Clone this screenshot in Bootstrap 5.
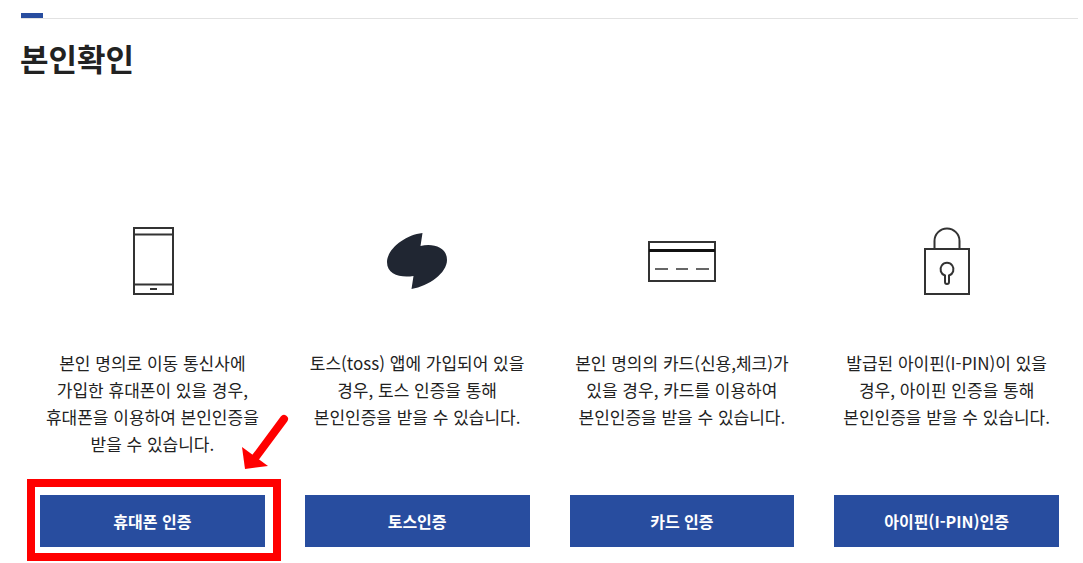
<!DOCTYPE html>
<html lang="ko">
<head>
<meta charset="utf-8">
<meta name="viewport" content="width=device-width, initial-scale=1">
<title>본인확인</title>
<link href="https://cdn.jsdelivr.net/npm/bootstrap@5.3.0/dist/css/bootstrap.min.css" rel="stylesheet">
<style>
  body { font-family: "Noto Sans CJK KR", sans-serif; color: #222; background: #fff; }
  .page { padding: 13px 4px 16px 20px; }
  .title-rule { height: 6px; border-bottom: 1px solid #e2e2e2; margin: 0 1px; }
  .title-rule::before { content: ""; display: block; width: 22px; height: 5px; background: #284d9f; }
  .page-title { font-size: 31px; line-height: 46px; font-weight: 700; margin: 16px 0 134px; }
  .method { padding: 0 20px; }
  .method-icon { height: 90px; margin-bottom: 44px; }
  .method-text { font-size: 17px; line-height: 27px; min-height: 108px; margin: 0 -8px 38px; word-break: keep-all; }
  .btn-auth { --bs-btn-color: #fff; --bs-btn-bg: #284d9f; --bs-btn-hover-color: #fff; --bs-btn-hover-bg: #1f3e83; height: 52px; font-size: 16px; line-height: 24px; font-weight: 700; border: 0; }
  .highlight { position: absolute; top: -16px; right: -16px; bottom: -14px; left: -13px; border: 8px solid #f00; pointer-events: none; }
  .pointer { position: absolute; right: -24px; bottom: 78px; pointer-events: none; }
</style>
</head>
<body>
<main class="page container-fluid">
  <div class="title-rule"></div>
  <h1 class="page-title">본인확인</h1>
  <div class="row g-0 text-center">
    <section class="method col-3">
      <div class="method-icon">
        <svg width="70" height="90" viewBox="0 0 70 90" fill="none" stroke="#333" stroke-width="2" aria-hidden="true">
          <path d="M17 13h39v66H17zM17 19.500h39M17 69.500h39"/><path d="M33 74h7"/>
        </svg>
      </div>
      <p class="method-text">본인 명의로 이동 통신사에<br>가입한 휴대폰이 있을 경우,<br>휴대폰을 이용하여 본인인증을<br>받을 수 있습니다.</p>
      <div class="position-relative">
        <button type="button" class="btn btn-auth rounded-0 w-100">휴대폰 인증</button>
        <span class="highlight"></span>
        <svg class="pointer" width="48" height="58" viewBox="0 0 48 58" aria-hidden="true">
          <path d="M43 8L14 47" stroke="#f00" stroke-width="8" stroke-linecap="round"/>
          <path d="M1 36L4 58 27 55z" fill="#f00"/>
        </svg>
      </div>
    </section>
    <section class="method col-3">
      <div class="method-icon">
        <svg width="80" height="90" viewBox="0 0 80 90" aria-hidden="true">
          <path fill="#202632" d="M45.500 18L43.500 31C56 28 70 32 70 45C70 58 52 71 34.500 74L36.500 61C24 63 10 60 10 47C10 35 27 20 45.500 18z"/>
        </svg>
      </div>
      <p class="method-text">토스(toss) 앱에 가입되어 있을<br>경우, 토스 인증을 통해<br>본인인증을 받을 수 있습니다.</p>
      <button type="button" class="btn btn-auth rounded-0 w-100">토스인증</button>
    </section>
    <section class="method col-3">
      <div class="method-icon">
        <svg width="84" height="90" viewBox="0 0 84 90" fill="none" stroke="#333" stroke-width="2" aria-hidden="true">
          <path d="M9 27h66v39H9z"/><path stroke="#111" stroke-width="3" d="M9 35.500h66"/>
          <path stroke="#666" d="M15 54h13M36 54h12M56 54h13"/>
        </svg>
      </div>
      <p class="method-text">본인 명의의 카드(신용,체크)가<br>있을 경우, 카드를 이용하여<br>본인인증을 받을 수 있습니다.</p>
      <button type="button" class="btn btn-auth rounded-0 w-100">카드 인증</button>
    </section>
    <section class="method col-3">
      <div class="method-icon">
        <svg width="70" height="90" viewBox="0 0 70 90" fill="none" stroke="#333" stroke-width="2" aria-hidden="true">
          <path d="M13 34h44v45H13z"/><path d="M22.500 34V26a12.500 12.500 0 0 1 25 0v8"/>
          <path d="M33 60.500a6.500 6.500 0 1 1 4 0V67a2 2 0 0 1-4 0z"/>
        </svg>
      </div>
      <p class="method-text">발급된 아이핀(I-PIN)이 있을<br>경우, 아이핀 인증을 통해<br>본인인증을 받을 수 있습니다.</p>
      <button type="button" class="btn btn-auth rounded-0 w-100">아이핀(I-PIN)인증</button>
    </section>
  </div>
</main>
<script src="https://cdn.jsdelivr.net/npm/bootstrap@5.3.0/dist/js/bootstrap.bundle.min.js"></script>
</body>
</html>
